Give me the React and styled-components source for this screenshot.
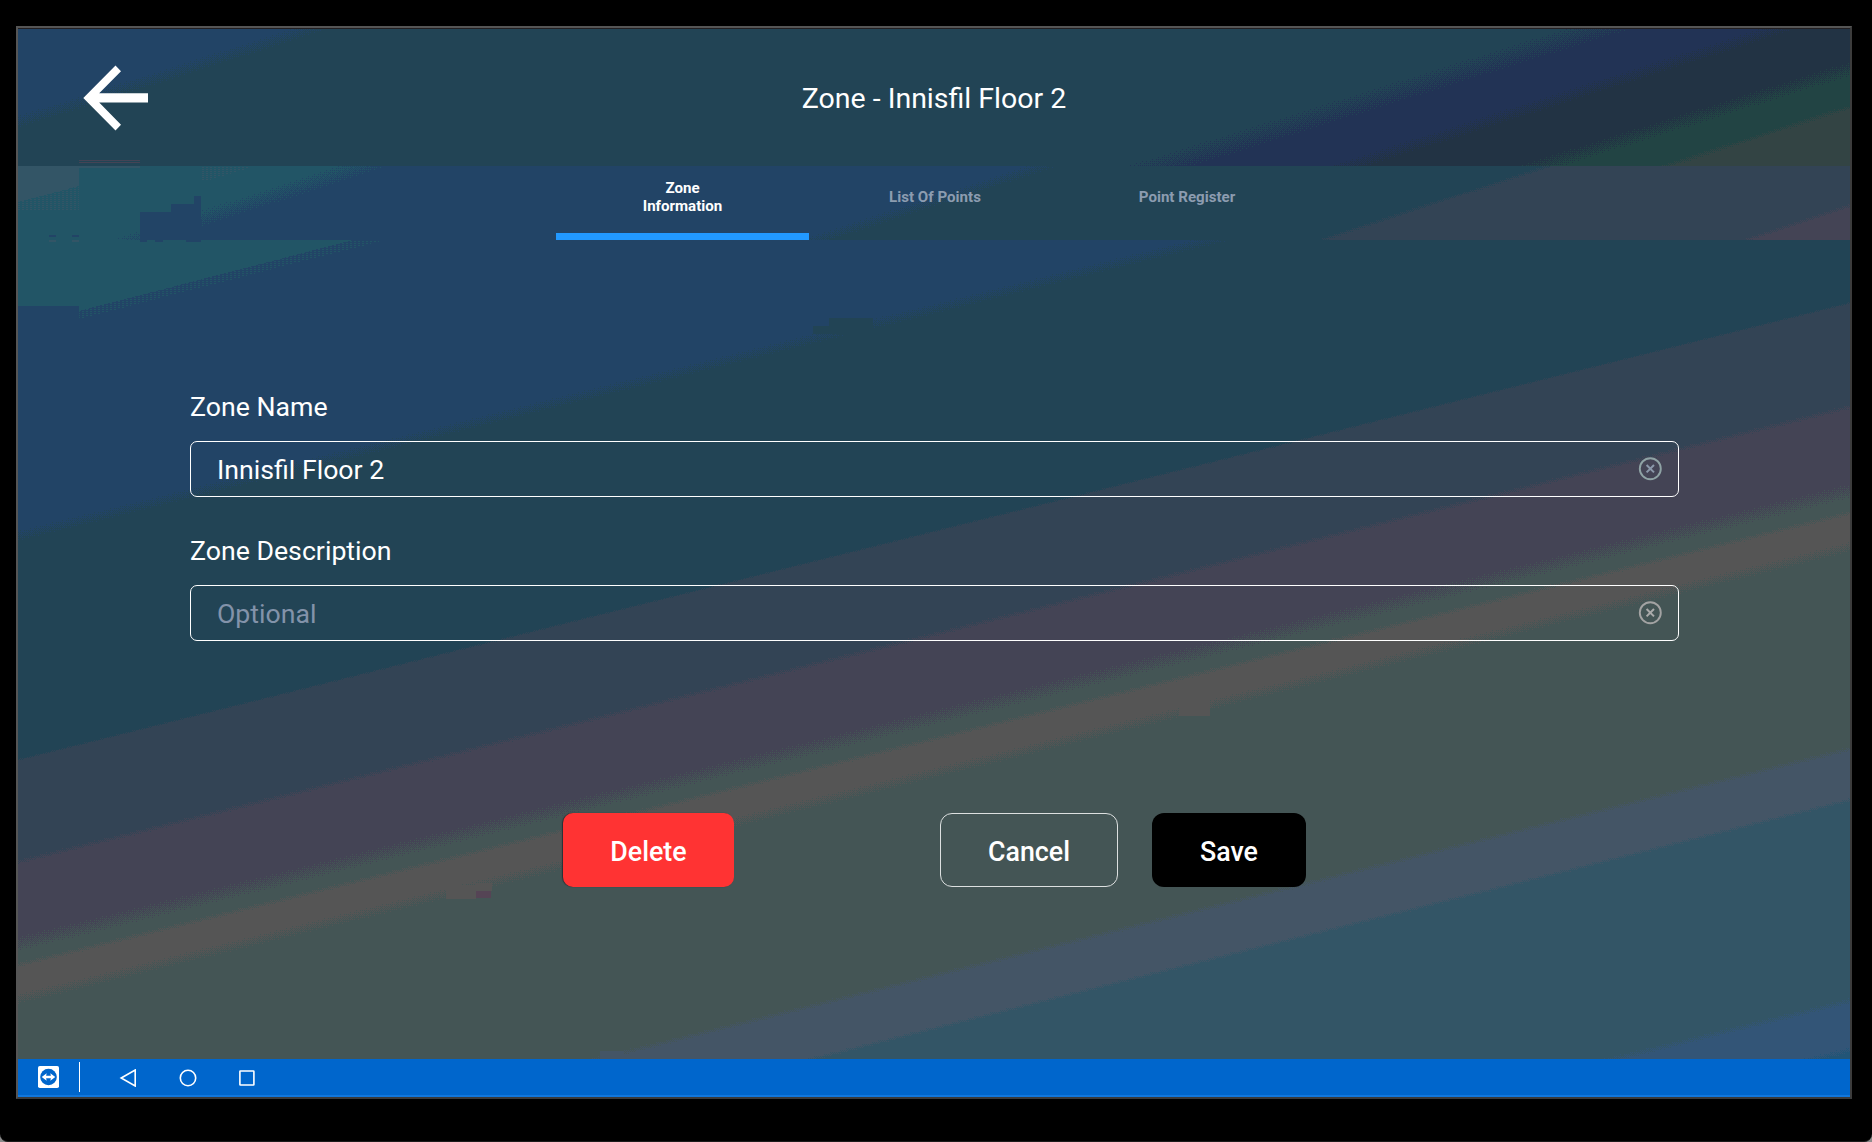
import React from "react";
import styled, { createGlobalStyle, css } from "styled-components";

const GlobalStyle = createGlobalStyle`
  *, *::before, *::after { box-sizing: border-box; }
  html, body { margin: 0; padding: 0; background: #8c8c8c; }
  body, input, button { font-family: Roboto, "Liberation Sans", sans-serif; }
`;

const Device = styled.div`
  width: 1872px;
  height: 1142px;
  padding: 26px 20px 43px 16px;
  background: #000;
  border-bottom: 1px solid #1c1c1c;
  border-radius: 0 0 8px 8px;
  overflow: hidden;
`;

const Bezel = styled.div`
  height: 1073px;
  border: 2px solid #555;
  border-right-color: #3c3c3c;
  border-bottom-color: #3a3a3a;
`;

const Screen = styled.main`
  position: relative;
  isolation: isolate;
  display: flex;
  flex-direction: column;
  height: 100%;
  border-top: 1px solid #221f22;
  color: #fff;
  overflow: hidden;
`;

const Wallpaper = styled.svg`
  position: absolute;
  inset: 0;
  z-index: -1;
  display: block;
`;

const Header = styled.header`
  display: grid;
  grid-template-columns: 200px 1fr 200px;
  align-items: center;
  height: 137px;
  flex: none;
`;

const BackButton = styled.button`
  display: flex;
  padding: 0;
  margin-left: 65px;
  width: 66px;
  border: 0;
  background: none;
`;

const Title = styled.h1`
  margin: 0;
  padding-top: 2px;
  font-size: 28.5px;
  font-weight: 400;
  line-height: 40px;
  text-align: center;
  white-space: nowrap;
`;

const Tabs = styled.nav`
  display: grid;
  grid-template-columns: 253px 252px 252px;
  justify-content: center;
  height: 74px;
  padding-left: 1px;
  flex: none;
`;

const Tab = styled.button`
  display: flex;
  align-items: center;
  justify-content: center;
  padding: 1px ${(p) => (p.$active ? 80 : 0)}px 7px;
  border: 0;
  border-bottom: 7px solid ${(p) => (p.$active ? "#2299ff" : "transparent")};
  background: none;
  color: ${(p) => (p.$active ? "#fff" : "#8c9cb0")};
  font-size: 15.1px;
  font-weight: 700;
  line-height: 18px;
  text-align: center;
`;

const Form = styled.form`
  flex: 1;
  display: flex;
  flex-direction: column;
  padding: 148px 171px 0 172px;
`;

const Field = styled.label`
  display: flex;
  flex-direction: column;
  height: 144px;
`;

const FieldLabel = styled.span`
  height: 53px;
  font-size: 26.7px;
  line-height: 39px;
`;

const InputBox = styled.span`
  display: flex;
  align-items: center;
  height: 56px;
  padding: 0 15px 0 26px;
  border: 1px solid #fff;
  border-radius: 7px;
`;

const TextInput = styled.input`
  flex: 1;
  min-width: 0;
  padding: 1px 0 0;
  border: 0;
  outline: 0;
  background: none;
  color: #fff;
  font-size: 26.7px;
  &::placeholder { color: #8393aa; opacity: 1; }
`;

const Actions = styled.div`
  display: flex;
  height: 74px;
  margin: 137px 0 0 373px;
`;

const variants = {
  danger: css`
    width: 171px;
    margin-right: 206px;
    background: #ff3333;
    border-radius: 10px;
    box-shadow: -1px 0 1px rgba(30, 40, 45, 0.8);
  `,
  outline: css`
    width: 178px;
    margin-right: 34px;
    background: transparent;
    border: 1px solid #dde0e0;
    border-radius: 12px;
  `,
  solid: css`
    width: 154px;
    background: #000;
    border-radius: 12px;
  `,
};

const ActionButton = styled.button`
  height: 74px;
  padding: 3px 0 0;
  border: 0;
  color: #fff;
  font-size: 26.8px;
  font-weight: 500;
  ${(p) => variants[p.$variant]}
`;

const SystemBar = styled.footer`
  display: flex;
  align-items: center;
  flex: none;
  height: 38px;
  padding-left: 20px;
  background: #0066cc;
  border-bottom: 2px solid #1177dd;
`;

const Divider = styled.span`
  width: 1px;
  height: 30px;
  margin: 0 39px 0 20px;
  background: #fff;
`;

const NavButtons = styled.div`
  display: flex;
  gap: 38px;
  padding-top: 2px;
`;

const PANELS = [
  {
    top: 0, height: 137, base: "#224466",
    bands: [
      { color: "#224455", from: [0, 93], to: [292, 0], grain: 12 },
      { color: "#223355", from: [1142, 137], to: [1580, 0], grain: 20 },
      { color: "#223344", from: [1330, 137], to: [1760, 0], grain: 12 },
      { color: "#224444", from: [1522, 137], to: [1832, 40], grain: 14 },
      { color: "#334444", from: [1648, 137], to: [1832, 78], grain: 5 },
    ],
  },
  {
    top: 137, height: 74, base: "#225566",
    bands: [
      { color: "#224466", from: [118, 74], to: [345, 0], grain: 16 },
      { color: "#224455", from: [797, 74], to: [1025, 0], grain: 10 },
      { color: "#334455", from: [1303, 74], to: [1531, 0], grain: 4 },
      { color: "#444455", from: [1728, 74], to: [1832, 40], grain: 4 },
    ],
  },
  {
    top: 211, height: 819, base: "#224466",
    bands: [
      { color: "#224455", from: [0, 296], to: [1193, 0], grain: 10 },
      { color: "#334455", from: [0, 520], to: [1832, 63], grain: 2 },
      { color: "#444455", from: [0, 622], to: [1832, 167], grain: 5 },
      { color: "#445555", from: [0, 704], to: [1832, 251], grain: 14 },
      { color: "#555555", from: [0, 725], to: [1832, 273], grain: 5 },
      { color: "#445555", from: [0, 759], to: [1832, 307], grain: 10 },
      { color: "#445566", from: [580, 819], to: [1832, 509], grain: 5 },
      { color: "#335566", from: [793, 819], to: [1832, 560], grain: 4 },
      { color: "#335577", from: [1596, 819], to: [1832, 761], grain: 6 },
      { color: "#225577", from: [1796, 819], to: [1832, 810], grain: 6 },
    ],
  },
];

// Ordered 4x4 threshold matrix used to fade one band into the next.
const BAYER = [0, 8, 2, 10, 12, 4, 14, 6, 3, 11, 1, 9, 15, 7, 13, 5];
const LEVELS = [2, 4, 6, 8, 10, 12, 14];

const dots = (level) =>
  BAYER.map((t, i) => (t < level ? `M${i % 4} ${Math.floor(i / 4)}h1v1h-1z` : "")).join("");

function Band({ id, height, color, from, to, grain }) {
  const slope = (from[1] - to[1]) / (to[0] - from[0]);
  const x1 = from[0] - 200;
  const x2 = to[0] + 200;
  const area = (lift) => {
    const y1 = from[1] + 200 * slope - lift;
    const y2 = to[1] - 200 * slope - lift;
    const right = Math.max(x2, 1832);
    const bottom = Math.max(y1, height);
    return `${x1},${y1} ${x2},${y2} ${right},${y2} ${right},${bottom} ${x1},${bottom}`;
  };
  return (
    <g shapeRendering="crispEdges">
      {LEVELS.map((level, i) => (
        <React.Fragment key={level}>
          <pattern id={`${id}-${level}`} width="4" height="4" patternUnits="userSpaceOnUse">
            <path d={dots(level)} fill={color} />
          </pattern>
          <polygon
            points={area(grain * (0.5 - i / LEVELS.length))}
            fill={`url(#${id}-${level})`}
          />
        </React.Fragment>
      ))}
      <polygon points={area(-grain / 2)} fill={color} />
    </g>
  );
}

function Backdrop() {
  return (
    <Wallpaper width="1832" height="1068" viewBox="0 0 1832 1068" aria-hidden="true">
      {PANELS.map((panel, p) => (
        <svg key={p} y={panel.top} width="1832" height={panel.height}>
          <rect width="1832" height={panel.height} fill={panel.base} />
          {panel.bands.map((band, b) => (
            <Band key={b} id={`band-${p}-${b}`} height={panel.height} {...band} />
          ))}
        </svg>
      ))}
      <g shapeRendering="crispEdges">
        <pattern id="haze" width="4" height="2" patternUnits="userSpaceOnUse">
          <rect width="2" height="1" fill="#335566" />
        </pattern>
        <pattern id="wedge" width="4" height="2" patternUnits="userSpaceOnUse">
          <rect width="2" height="1" fill="#225566" />
        </pattern>
        <path d="M61 131h61v1h-61zM61 133h61v1h-61z" fill="#444455" />
        <path d="M0 137h61v20l-61 16z" fill="#335566" />
        <path d="M0 173L61 157V182H0z" fill="url(#haze)" />
        <path d="M61 137h61v2h-61z" fill="#335566" />
        <path d="M184 138h50l-46 14h-4z" fill="url(#haze)" />
        <path d="M0 211H335L61 282V277H0z" fill="#225566" />
        <path d="M335 211H367L61 290V282z" fill="url(#wedge)" />
        <path d="M122 183h31v-8h23v-8h7v44h-61z" fill="#224466" />
        <path d="M122 211h7v2h-7zM137 211h8v2h-8zM168 211h15v2h-15z" fill="#224466" />
        <path d="M31 206h7v2h-7zM54 206h7v2h-7z" fill="#224466" />
        <path d="M31 211h7v2h-7zM54 211h7v2h-7z" fill="#335566" />
        <path d="M795 297h16v-8h44v16h-60z" fill="#224455" />
        <path d="M1161 671h31v16h-31zM428 856h30v14h-30zM458 854h16v8h-16z" fill="#555555" />
        <path d="M458 862h15v7h-15z" fill="#554455" />
        <path d="M582 1022h24v8h-24z" fill="#445566" />
      </g>
    </Wallpaper>
  );
}

const ArrowLeft = () => (
  <svg width="66" height="66" viewBox="0 0 66 66" fill="#fff">
    <path d="M.3 33 32.5.6 38 6.2 16.2 28.3H65v9.3H16.2L38 59.8 32.5 65.4z" />
  </svg>
);

const ClearIcon = ({ ring, cross }) => (
  <svg width="26" height="26" viewBox="0 0 26 26" fill="none">
    <circle cx="13.3" cy="12.7" r="10.5" stroke={ring} strokeWidth="1.9" />
    <path d="M9.6 9l7.4 7.4M17 9l-7.4 7.4" stroke={cross} strokeWidth="2" />
  </svg>
);

const RemoteIcon = () => (
  <svg width="21" height="22" viewBox="0 0 21 22">
    <rect width="21" height="22" rx="1.8" fill="#fff" />
    <circle cx="10.5" cy="11" r="8.3" fill="#0066cc" />
    <path d="M3.7 11l5-3.7-.6 2.5h4.8l-.6-2.5 5 3.7-5 3.7.6-2.5H8.1l.6 2.5z" fill="#fff" />
  </svg>
);

const NavIcon = ({ children }) => (
  <svg width="18" height="18" viewBox="0 0 18 18" fill="none" stroke="#fff" strokeWidth="1.6">
    {children}
  </svg>
);

const NavSlot = styled.span`
  display: flex;
  width: ${(p) => p.$width}px;
`;

export default function App() {
  return (
    <>
      <GlobalStyle />
      <Device>
        <Bezel>
          <Screen>
            <Backdrop />
            <Header>
              <BackButton type="button" aria-label="Back">
                <ArrowLeft />
              </BackButton>
              <Title>Zone - Innisfil Floor 2</Title>
            </Header>
            <Tabs>
              <Tab $active>Zone Information</Tab>
              <Tab>List Of Points</Tab>
              <Tab>Point Register</Tab>
            </Tabs>
            <Form onSubmit={(e) => e.preventDefault()}>
              <Field>
                <FieldLabel>Zone Name</FieldLabel>
                <InputBox>
                  <TextInput defaultValue="Innisfil Floor 2" />
                  <ClearIcon ring="#8fa3a5" cross="#8b98aa" />
                </InputBox>
              </Field>
              <Field>
                <FieldLabel>Zone Description</FieldLabel>
                <InputBox>
                  <TextInput placeholder="Optional" />
                  <ClearIcon ring="#a3a3a3" cross="#aaa" />
                </InputBox>
              </Field>
              <Actions>
                <ActionButton type="button" $variant="danger">Delete</ActionButton>
                <ActionButton type="button" $variant="outline">Cancel</ActionButton>
                <ActionButton type="submit" $variant="solid">Save</ActionButton>
              </Actions>
            </Form>
            <SystemBar>
              <RemoteIcon />
              <Divider />
              <NavButtons>
                <NavSlot $width={22}>
                  <NavIcon><path d="M2.2 9L16.2 1v16z" /></NavIcon>
                </NavSlot>
                <NavSlot $width={21}>
                  <NavIcon><circle cx="9" cy="9" r="7.7" /></NavIcon>
                </NavSlot>
                <NavSlot $width={18}>
                  <NavIcon><rect x="1.9" y="2" width="14" height="14" rx=".5" /></NavIcon>
                </NavSlot>
              </NavButtons>
            </SystemBar>
          </Screen>
        </Bezel>
      </Device>
    </>
  );
}
